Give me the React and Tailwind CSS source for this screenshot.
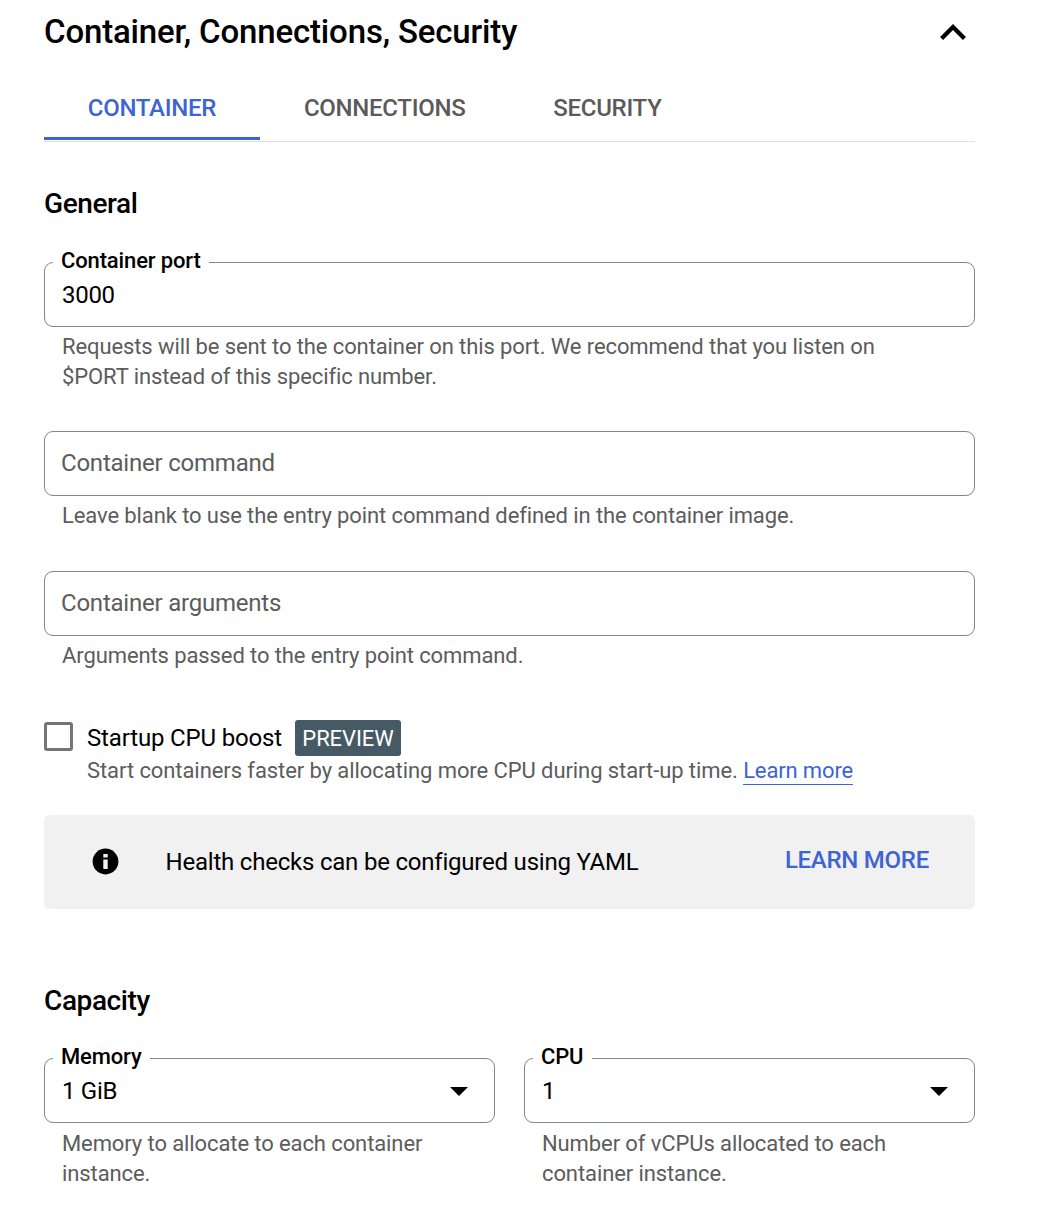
import React from "react";

function Legend({ children }) {
  return (
    <span className="absolute left-[8px] -top-[16px] bg-white pl-[8px] pr-[8.5px] text-[22px] leading-[28px] font-medium tracking-[-0.14px] whitespace-nowrap">
      {children}
    </span>
  );
}

function Field({ label, value, placeholder, select, helper, className }) {
  return (
    <div className={className}>
      <div className="relative flex h-[65px] items-center justify-between rounded-[9px] border border-[#80868b] pl-4 pr-[26px]">
        {label && <Legend>{label}</Legend>}
        {value && <span className="pl-px text-[24px] leading-[30px] tracking-[-0.3px]">{value}</span>}
        {placeholder && (
          <span className="pb-px text-[24px] leading-[30px] tracking-[-0.22px] text-[#5c5c5c]">{placeholder}</span>
        )}
        {select && (
          <svg className="mt-px h-[9px] w-[18px]" viewBox="0 0 18 9" aria-hidden="true">
            <path d="M0 0h18L9 9z" fill="#000" />
          </svg>
        )}
      </div>
      <p
        className={
          select
            ? "mt-[6px] pl-[18px] text-[22px] leading-[30px] tracking-[-0.1px] text-[#5c5c5c]"
            : "mt-[5px] pl-[18px] text-[22px] leading-[30px] tracking-[-0.1px] text-[#5c5c5c]"
        }
      >
        {helper}
      </p>
    </div>
  );
}

function Tab({ active, children }) {
  return (
    <button
      className={
        active
          ? "h-16 border-y-3 border-t-transparent border-b-[#3c64d3] pr-11 pl-[43.8px] text-[24px] font-medium tracking-[-0.28px] text-[#3c64d3]"
          : "h-16 border-y-3 border-transparent pr-11 pl-[43.8px] text-[24px] font-medium tracking-[-0.28px] text-[#5a5a5a]"
      }
    >
      {children}
    </button>
  );
}

export default function App() {
  return (
    <main className="min-h-[1206px] bg-white pl-11 pt-3 font-['Roboto',sans-serif] text-black">
      <div className="w-[931px]">
        <header className="flex h-10 items-center justify-between pr-[9.5px]">
          <h1 className="text-[33px] leading-[40px] font-medium tracking-[-0.16px]">Container, Connections, Security</h1>
          <svg className="mb-px h-[16px] w-[26px]" viewBox="6 8 12 7.41" aria-hidden="true">
            <path d="M12 8l-6 6 1.41 1.41L12 10.83l4.59 4.58L18 14z" fill="#000" />
          </svg>
        </header>

        <nav className="mt-6 flex border-b border-[#dfdfdf] pb-px">
          <Tab active>CONTAINER</Tab>
          <Tab>CONNECTIONS</Tab>
          <Tab>SECURITY</Tab>
        </nav>

        <h2 className="mt-[46px] text-[28px] leading-[32px] font-medium tracking-[-0.4px]">General</h2>
        <Field
          className="mt-[42px]"
          label="Container port"
          value="3000"
          helper={
            <>
              Requests will be sent to the container on this port. We recommend that you listen on
              <br />
              $PORT instead of this specific number.
            </>
          }
        />
        <Field
          className="mt-[39px]"
          placeholder="Container command"
          helper="Leave blank to use the entry point command defined in the container image."
        />
        <Field
          className="mt-10"
          placeholder="Container arguments"
          helper="Arguments passed to the entry point command."
        />

        <div className="mt-[49px] flex gap-[14px]">
          <span className="mt-[2px] size-[29px] shrink-0 rounded-[3px] border-3 border-[#757575]" />
          <div>
            <div className="flex items-center">
              <span className="w-[195px] text-[24px] leading-[36px] tracking-[-0.16px] whitespace-nowrap">
                Startup CPU boost
              </span>
              <span className="ml-[13px] flex h-9 w-[106px] items-center justify-center rounded-[3px] bg-[#455a64] text-[22px] tracking-[-0.1px] text-white">
                PREVIEW
              </span>
            </div>
            <p className="text-[22px] leading-[30px] tracking-[-0.08px] text-[#5c5c5c]">
              Start containers faster by allocating more CPU during start-up time.{" "}
              <a className="border-b border-[#3c64d3] pb-px tracking-[-0.14px] text-[#3c64d3]">Learn more</a>
            </p>
          </div>
        </div>

        <section className="mt-[29px] flex h-[94px] items-center rounded-[6px] bg-[#f1f1f1] pl-12 pr-[46px]">
          <svg className="mb-px size-[27px]" viewBox="0 0 27 27" aria-hidden="true">
            <circle cx="13.500" cy="13.500" r="12.900" fill="#000" />
            <path d="M11.300 6h4.400v3.500h-4.400zM11.300 11.500h4.400v9.500h-4.400z" fill="#f1f1f1" />
          </svg>
          <span className="ml-[46.5px] text-[24px] tracking-[-0.21px]">Health checks can be configured using YAML</span>
          <a className="ml-auto pb-[4px] text-[24px] font-medium tracking-[-0.26px] text-[#3c64d3]">LEARN MORE</a>
        </section>

        <h2 className="mt-[76px] text-[28px] leading-[32px] font-medium tracking-[-0.4px]">Capacity</h2>
        <div className="mt-[41px] grid grid-cols-2 gap-[29px]">
          <Field
            label="Memory"
            value="1 GiB"
            select
            helper={
              <>
                Memory to allocate to each container
                <br />
                instance.
              </>
            }
          />
          <Field
            label="CPU"
            value="1"
            select
            helper={
              <>
                Number of vCPUs allocated to each
                <br />
                container instance.
              </>
            }
          />
        </div>
      </div>
    </main>
  );
}
